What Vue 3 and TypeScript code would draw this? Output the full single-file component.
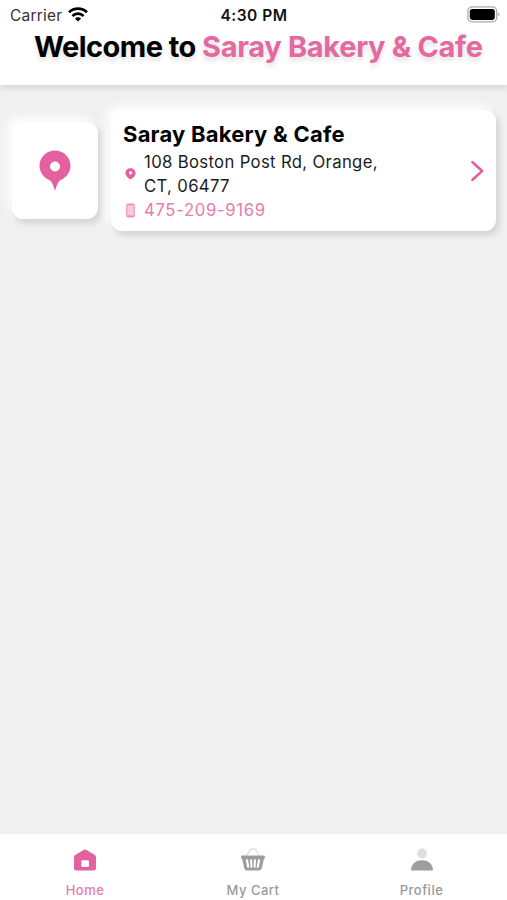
<script setup lang="ts">
interface Tab {
  id: 'home' | 'cart' | 'profile'
  label: string
}

const shop = {
  name: 'Saray Bakery & Cafe',
  street: '108 Boston Post Rd, Orange,',
  city: 'CT, 06477',
  phone: '475-209-9169',
}

const tabs: Tab[] = [
  { id: 'home', label: 'Home' },
  { id: 'cart', label: 'My Cart' },
  { id: 'profile', label: 'Profile' },
]
const activeTab: Tab['id'] = 'home'
</script>

<template>
  <div class="screen">
    <header class="header">
      <div class="status">
        <div class="carrier">
          <span>Carrier</span>
          <svg width="20" height="15" viewBox="0 0 20 15" fill="none" stroke="#000" stroke-width="2.7">
            <path d="M1 5.3C6 .5 14 .5 19 5.3" />
            <path d="M4.4 8.9C7.6 5.9 12.4 5.9 15.6 8.9" />
            <path d="M6.9 11.4C8.7 9.8 11.3 9.8 13.1 11.4L10 14.6Z" fill="#000" stroke="none" />
          </svg>
        </div>
        <time class="time">4:30 PM</time>
        <svg class="battery" width="33" height="17" viewBox="0 0 33 17">
          <rect x=".9" y=".9" width="28.8" height="15" rx="4.3" fill="#fff" stroke="#aaa" stroke-width="1.3" />
          <rect x="2.8" y="2.9" width="25" height="11" rx="2.4" fill="#000" />
          <path d="M31.2 6.2c1.8.7 1.8 3.7 0 4.4z" fill="#aaa" />
        </svg>
      </div>
      <h1 class="title">Welcome to <span class="brand">{{ shop.name }}</span></h1>
    </header>

    <main class="content">
      <div class="pin-card">
        <svg width="32" height="42" viewBox="0 0 32 42">
          <path fill="#e5609f" fill-rule="evenodd" d="M16 .5C7.4.5.5 7.3.5 15.8c0 6.2 3.9 11.7 9.8 14.3 2.7 1.3 3.9 6 5.7 10.6 1.8-4.6 3-9.3 5.7-10.6 5.9-2.6 9.8-8.1 9.8-14.3C31.5 7.3 24.6.5 16 .5Zm0 11a5 5 0 1 1 0 10 5 5 0 0 1 0-10Z" />
        </svg>
      </div>
      <section class="shop-card">
        <div class="details">
          <h2 class="name">{{ shop.name }}</h2>
          <div class="row address">
            <svg class="row-icon" width="11" height="12" viewBox="0 0 11 12">
              <path fill="#e5609f" fill-rule="evenodd" d="M5.5.3C2.6.3.4 2.4.4 5.1c0 3 2.5 4.8 5.1 6.4 2.6-1.6 5.1-3.4 5.1-6.4C10.6 2.4 8.4.3 5.5.3Zm0 2.9a1.6 1.6 0 1 1 0 3.2 1.6 1.6 0 0 1 0-3.2Z" />
            </svg>
            <p>{{ shop.street }}<br />{{ shop.city }}</p>
          </div>
          <div class="row phone">
            <svg class="row-icon" width="11" height="15" viewBox="0 0 11 15">
              <rect x="1" y=".5" width="9" height="14" rx="1.8" fill="#f3a9ca" />
              <rect x="2.6" y="2.5" width="5.8" height="9.5" fill="#f8cade" />
              <path d="M2.5 1.3h6M2.5 13.6h6" stroke="#e985b3" />
            </svg>
            <p>{{ shop.phone }}</p>
          </div>
        </div>
        <svg class="chevron" width="14" height="22" viewBox="0 0 14 22" fill="none" stroke="#e2609c" stroke-width="2.6" stroke-linecap="round" stroke-linejoin="round">
          <path d="M1.5 2.2l9.7 8.8L1.5 19.8" />
        </svg>
      </section>
    </main>

    <nav class="tabs">
      <div v-for="tab in tabs" :key="tab.id" class="tab" :class="{ active: tab.id === activeTab }">
        <svg v-if="tab.id === 'home'" width="26" height="26" viewBox="0 0 26 26">
          <path fill="#e5609f" fill-rule="evenodd" d="M12 2.8q1-.6 2 0l8.5 5q1.5.9 1.5 2.5V21q0 2.500-2.500 2.500h-17Q2 23.500 2 21V10.300q0-1.600 1.500-2.500ZM10.300 13.300q-1 0-1 1v4.700q0 1 1 1h5.600q1 0 1-1v-4.700q0-1-1-1Z" />
        </svg>
        <svg v-else-if="tab.id === 'cart'" width="26" height="26" viewBox="0 0 26 26">
          <path d="M6.5 9.5L9.5 3.5q.8-1.500 2.500-1.500h2q1.700 0 2.500 1.500l3 6" fill="none" stroke="#dedede" stroke-width="1.5" />
          <path fill="#9e9e9e" d="M2 8.5h22q1 0 1 1v1q0 1-1 1.200l-2.200 9.600Q21.300 23.500 19 23.500H7Q4.700 23.500 4.200 21.300L2 11.700Q1 11.500 1 10.500v-1q0-1 1-1Z" />
          <path d="M7 13.2l1.2 6.500M11.100 13.200l.3 6.500M14.900 13.200l-.3 6.500M19 13.200l-1.200 6.500" stroke="#fff" stroke-width="2.1" stroke-linecap="round" />
        </svg>
        <svg v-else width="26" height="26" viewBox="0 0 26 26">
          <circle cx="13" cy="6.5" r="4.9" fill="#dedede" />
          <path fill="#9e9e9e" d="M3.3 23.5Q2 23.500 2 22.200C3 16.300 7.200 13.300 13 13.300s10 3 11 8.900q0 1.300-1.300 1.300Z" />
        </svg>
        <span>{{ tab.label }}</span>
      </div>
    </nav>
  </div>
</template>

<style>
body {
  margin: 0;
}
</style>

<style scoped>
.screen {
  display: flex;
  flex-direction: column;
  height: 900px;
  overflow: hidden;
  background: #f0f0f0;
  color: #000;
  font-family: Inter, "Liberation Sans", sans-serif;
}
h1,
h2,
p {
  margin: 0;
}
.header {
  height: 85px;
  background: #fff;
  box-shadow: 0 2px 7px rgba(0, 0, 0, 0.14);
}
.status {
  display: grid;
  grid-template-columns: 1fr auto 1fr;
  align-items: center;
  height: 30px;
  padding: 0 9px 0 10px;
}
.carrier {
  display: flex;
  align-items: center;
  gap: 6px;
  color: #333;
  font-size: 15.5px;
  letter-spacing: 0.2px;
}
.carrier svg {
  margin-top: -2px;
}
.time {
  font-size: 15.5px;
  font-weight: 600;
  letter-spacing: 0.5px;
  color: #111;
}
.battery {
  justify-self: end;
  margin-top: -2px;
  margin-right: -2px;
}
.title {
  padding-left: 34px;
  font-size: 29px;
  line-height: 33px;
  font-weight: 700;
  letter-spacing: -0.56px;
  white-space: nowrap;
  text-shadow: 0 4px 5px rgba(0, 0, 0, 0.12);
}
.brand {
  color: #e5689f;
  letter-spacing: -0.33px;
}
.content {
  flex: 1;
  display: flex;
  align-items: center;
  gap: 13px;
  max-height: 121px;
  padding: 25px 11px 0 12px;
  margin-bottom: auto;
}
.pin-card,
.shop-card {
  display: flex;
  align-items: center;
  background: #fff;
  border-radius: 11px;
  box-shadow: 3px 4px 6px rgba(0, 0, 0, 0.13), -5px -5px 10px rgba(255, 255, 255, 0.9);
}
.pin-card {
  justify-content: center;
  width: 86px;
  height: 97px;
}
.shop-card {
  flex: 1;
  height: 121px;
  box-sizing: border-box;
  padding: 0 11px 0 12px;
}
.details {
  flex: 1;
  padding-top: 3px;
}
.name {
  font-size: 22px;
  line-height: 24px;
  padding-bottom: 4px;
  font-weight: 700;
  letter-spacing: 0.22px;
}
.row {
  display: flex;
  align-items: center;
  gap: 8px;
  padding-left: 2px;
  font-size: 16.7px;
  line-height: 24.2px;
  letter-spacing: 0.34px;
}
.address {
  color: #1c1c1c;
}
.phone {
  color: #e87baf;
  letter-spacing: 0.65px;
}
.row-icon {
  flex: none;
}
.tabs {
  display: grid;
  grid-template-columns: 170px 166px 1fr;
  height: 66px;
  background: #fff;
}
.tab {
  display: flex;
  flex-direction: column;
  align-items: center;
  padding-top: 13px;
  color: #999;
  font-size: 13px;
  line-height: 16px;
  font-weight: 500;
  letter-spacing: 0.5px;
}
.tab span {
  margin-top: 9px;
}
.active {
  color: #e87baf;
}
</style>
